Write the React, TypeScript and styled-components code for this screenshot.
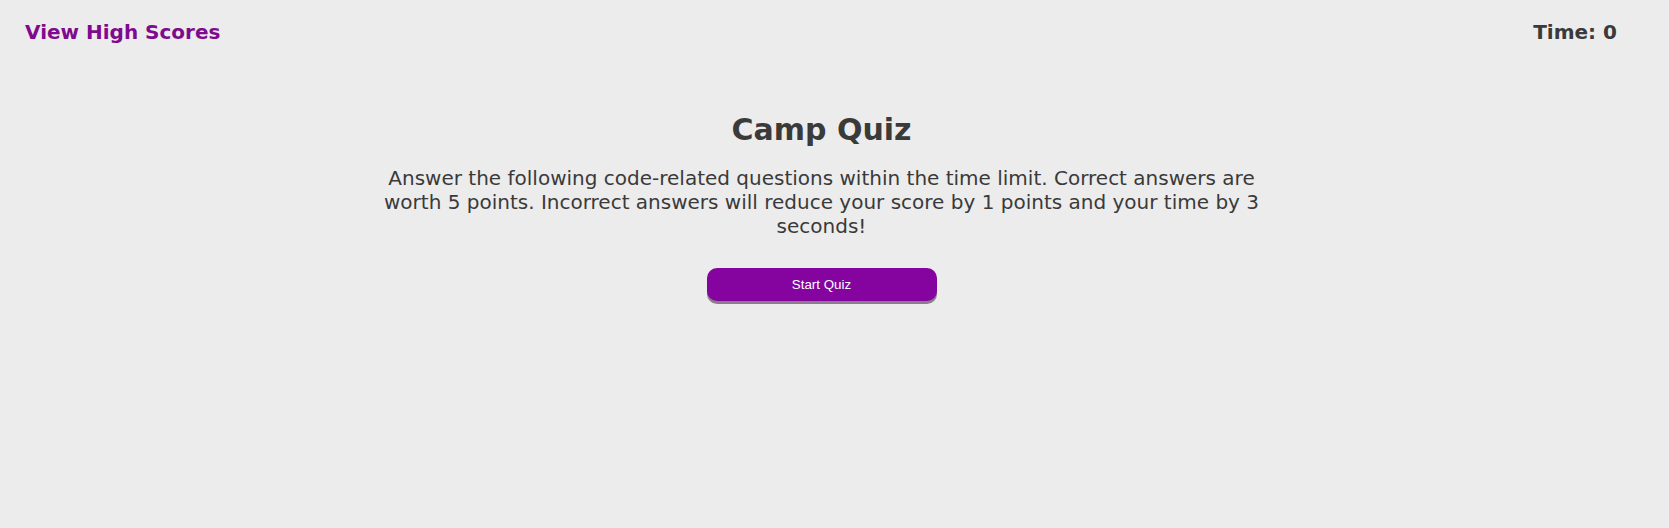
import React from "react";
import styled, { createGlobalStyle } from "styled-components";

const GlobalStyle = createGlobalStyle`
  html, body {
    margin: 0;
    padding: 0;
    background: #ececec;
  }
  body {
    font-family: "DejaVu Sans", Verdana, sans-serif;
    color: #3a3a3a;
  }
`;

const Page = styled.div`
  min-height: 528px;
  background: #ececec;
`;

const Header = styled.header`
  display: flex;
  justify-content: space-between;
  align-items: center;
  padding: 20px 52px 0 25px;
`;

const HighScoresLink = styled.a`
  font-size: 20px;
  font-weight: bold;
  color: #800a8f;
  text-decoration: none;
  cursor: pointer;
`;

const Timer = styled.div`
  font-size: 20px;
  font-weight: bold;
  color: #3a3a3a;
`;

const Main = styled.main`
  display: flex;
  flex-direction: column;
  align-items: center;
  margin-right: 26px;
  padding-top: 68px;
`;

const Title = styled.h1`
  margin: 0;
  font-size: 30px;
  font-weight: bold;
  color: #3a3a3a;
`;

const Intro = styled.p`
  margin: 19px 0 0;
  max-width: 900px;
  text-align: center;
  font-size: 20px;
  line-height: 24px;
  color: #3a3a3a;
`;

const StartButton = styled.button`
  margin-top: 30px;
  width: 230px;
  height: 33px;
  border: none;
  border-radius: 10px;
  background: #85049f;
  color: #ffffff;
  font-family: "Liberation Sans", Arial, sans-serif;
  font-size: 13.33px;
  box-shadow: 0 3px 0 #8a7d8c;
  cursor: pointer;
`;

export default function App() {
  return (
    <Page>
      <GlobalStyle />
      <Header>
        <HighScoresLink>View High Scores</HighScoresLink>
        <Timer>Time: 0</Timer>
      </Header>
      <Main>
        <Title>Camp Quiz</Title>
        <Intro>
          Answer the following code-related questions within the time limit. Correct answers are
          worth 5 points. Incorrect answers will reduce your score by 1 points and your time by 3
          seconds!
        </Intro>
        <StartButton>Start Quiz</StartButton>
      </Main>
    </Page>
  );
}
